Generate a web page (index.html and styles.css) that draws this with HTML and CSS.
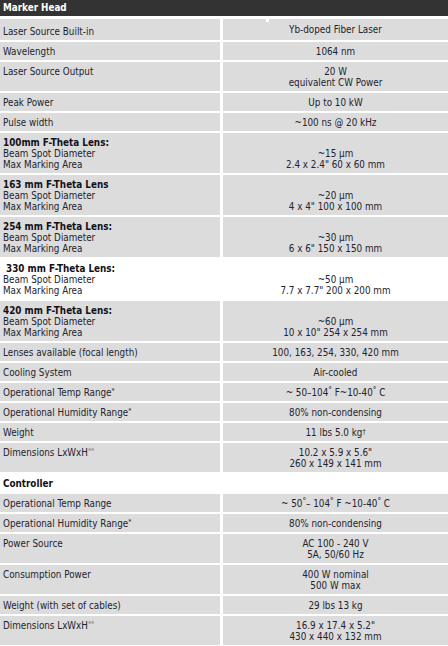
FILE: index.html
```html
<!DOCTYPE html>
<html>
<head>
<meta charset="utf-8">
<link rel="stylesheet" href="styles.css">
</head>
<body>
<div class="spec">
  <div class="head">Marker Head</div>

  <div class="k first">Laser Source Built-in</div>
  <div class="v first"><span class="mark"></span><span>Yb-doped Fiber Laser</span></div>

  <div class="k">Wavelength</div>
  <div class="v"><span>1064 nm</span></div>

  <div class="k">Laser Source Output</div>
  <div class="v"><span>20 W<br>equivalent CW Power</span></div>

  <div class="k">Peak Power</div>
  <div class="v"><span>Up to 10 kW</span></div>

  <div class="k">Pulse width</div>
  <div class="v"><span>~100 ns @ 20 kHz</span></div>

  <div class="k"><b>100mm F-Theta Lens:</b><br>Beam Spot Diameter<br>Max Marking Area</div>
  <div class="v"><span><br>~15 µm<br>2.4 x 2.4" 60 x 60 mm</span></div>

  <div class="k"><b>163 mm F-Theta Lens</b><br>Beam Spot Diameter<br>Max Marking Area</div>
  <div class="v"><span><br>~20 µm<br>4 x 4" 100 x 100 mm</span></div>

  <div class="k"><b>254 mm F-Theta Lens:</b><br>Beam Spot Diameter<br>Max Marking Area</div>
  <div class="v"><span><br>~30 µm<br>6 x 6" 150 x 150 mm</span></div>

  <div class="k white"><b>&nbsp;330 mm F-Theta Lens:</b><br>Beam Spot Diameter<br>Max Marking Area</div>
  <div class="v white"><span><br>~50 µm<br>7.7 x 7.7" 200 x 200 mm</span></div>

  <div class="k"><b>420 mm F-Theta Lens:</b><br>Beam Spot Diameter<br>Max Marking Area</div>
  <div class="v"><span><br>~60 µm<br>10 x 10" 254 x 254 mm</span></div>

  <div class="k">Lenses available (focal length)</div>
  <div class="v"><span>100, 163, 254, 330, 420 mm</span></div>

  <div class="k">Cooling System</div>
  <div class="v"><span>Air-cooled</span></div>

  <div class="k">Operational Temp Range<sup>*</sup></div>
  <div class="v"><span>~ 50–104<sup class="deg">°</sup> F~10-40<sup class="deg">°</sup> C</span></div>

  <div class="k">Operational Humidity Range<sup>*</sup></div>
  <div class="v"><span>80% non-condensing</span></div>

  <div class="k">Weight</div>
  <div class="v"><span>11 lbs 5.0 kg<sup class="dag">†</sup></span></div>

  <div class="k">Dimensions LxWxH<sup class="ast">**</sup></div>
  <div class="v"><span>10.2 x 5.9 x 5.6"<br>260 x 149 x 141 mm</span></div>

  <div class="k white"><b>Controller</b></div>
  <div class="v white"></div>

  <div class="k">Operational Temp Range</div>
  <div class="v"><span>~ 50<sup class="deg">°</sup>– 104<sup class="deg">°</sup> F ~10-40<sup class="deg">°</sup> C</span></div>

  <div class="k">Operational Humidity Range<sup>*</sup></div>
  <div class="v"><span>80% non-condensing</span></div>

  <div class="k">Power Source</div>
  <div class="v"><span>AC 100 - 240 V<br>5A, 50/60 Hz</span></div>

  <div class="k">Consumption Power</div>
  <div class="v"><span>400 W nominal<br>500 W max</span></div>

  <div class="k">Weight (with set of cables)</div>
  <div class="v"><span>29 lbs 13 kg</span></div>

  <div class="k">Dimensions LxWxH<sup class="ast">**</sup></div>
  <div class="v"><span>16.9 x 17.4 x 5.2"<br>430 x 440 x 132 mm</span></div>
</div>
</body>
</html>
```
FILE: styles.css
```css
html, body {
  margin: 0;
  padding: 0;
  background: #ffffff;
}
body {
  width: 448px;
  font-family: "DejaVu Sans Condensed", "DejaVu Sans", sans-serif;
  font-size: 9.8px;
  line-height: 11px;
  color: #23232e;
}
.spec {
  display: grid;
  grid-template-columns: 220px 225px;
  column-gap: 3px;
  row-gap: 2px;
}
.head {
  grid-column: 1 / 3;
  background: #333333;
  color: #ffffff;
  font-weight: bold;
  height: 16px;
  line-height: 16px;
  padding: 0 3px;
  margin-bottom: 1px;
}
.k, .v {
  background: #dcdcdc;
  padding: 3.5px 3px;
  min-height: 11px;
}
.v {
  text-align: center;
  display: flex;
  align-items: center;
  justify-content: center;
}
.v.first {
  position: relative;
}
.k.first {
  padding-top: 6.5px;
}
.mark {
  position: absolute;
  left: 43px;
  top: 0;
  width: 3px;
  height: 3px;
  background: #ffffff;
}
.white {
  background: #ffffff;
}
b {
  font-weight: bold;
  color: #111118;
}
sup {
  font-size: 7px;
  line-height: 0;
  vertical-align: 3px;
}
sup.ast {
  color: #777780;
}
sup.deg {
  font-size: 8px;
}
sup.dag {
  font-size: 7px;
  vertical-align: 2px;
}
```
